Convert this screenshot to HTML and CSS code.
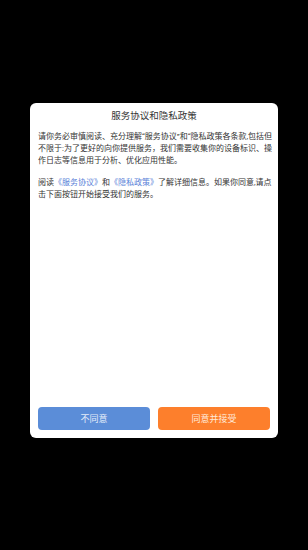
FILE: index.html
```html
<!DOCTYPE html>
<html lang="zh">
<head>
  <meta charset="UTF-8">
  <title>服务协议和隐私政策</title>
  <link rel="stylesheet" href="styles.css">
</head>
<body>
  <div class="dialog">
    <h1 class="title">服务协议和隐私政策</h1>
    <div class="content">
      <p>请你务必审慎阅读、充分理解“服务协议”和“隐私政策各条款,包括但不限于:为了更好的向你提供服务，我们需要收集你的设备标识、操作日志等信息用于分析、优化应用性能。</p>
      <p>阅读<a href="#">《服务协议》</a>和<a href="#">《隐私政策》</a>了解详细信息。如果你同意,请点击下面按钮开始接受我们的服务。</p>
    </div>
    <div class="button-group">
      <button class="btn btn-refuse">不同意</button>
      <button class="btn btn-accept">同意并接受</button>
    </div>
  </div>
</body>
</html>
```

FILE: styles.css
```css
html, body {
  height: 100%;
}

body {
  margin: 0;
  background-color: #000;
  font-family: Roboto, "Noto Sans CJK SC", sans-serif;
  color: #333;
}

.dialog {
  box-sizing: border-box;
  width: 248px;
  height: 335px;
  margin: 103px 0 0 30px;
  padding: 0 8px 8px;
  background-color: #fff;
  border-radius: 6px;
  display: flex;
  flex-direction: column;
}

.title {
  margin: 0;
  padding-top: 6px;
  font-size: 9.5px;
  font-weight: normal;
  line-height: 14px;
  text-align: center;
  color: #333;
}

.content {
  flex: 1;
  padding-top: 8px;
  margin-right: -8px;
}

.content p {
  margin: 0 0 10px;
  font-size: 8px;
  line-height: 12px;
}

.content a {
  color: #5a7fd8;
  text-decoration: none;
}

.button-group {
  display: flex;
  gap: 8px;
}

.btn {
  flex: 1;
  height: 23px;
  border: none;
  border-radius: 4px;
  font-family: inherit;
  font-size: 9px;
  color: #fff;
  padding: 0;
}

.btn-refuse {
  background-color: #5b8dd8;
  color: #e4ecf8;
}

.btn-accept {
  background-color: #fd7f2c;
  color: #ffe9da;
}
```
